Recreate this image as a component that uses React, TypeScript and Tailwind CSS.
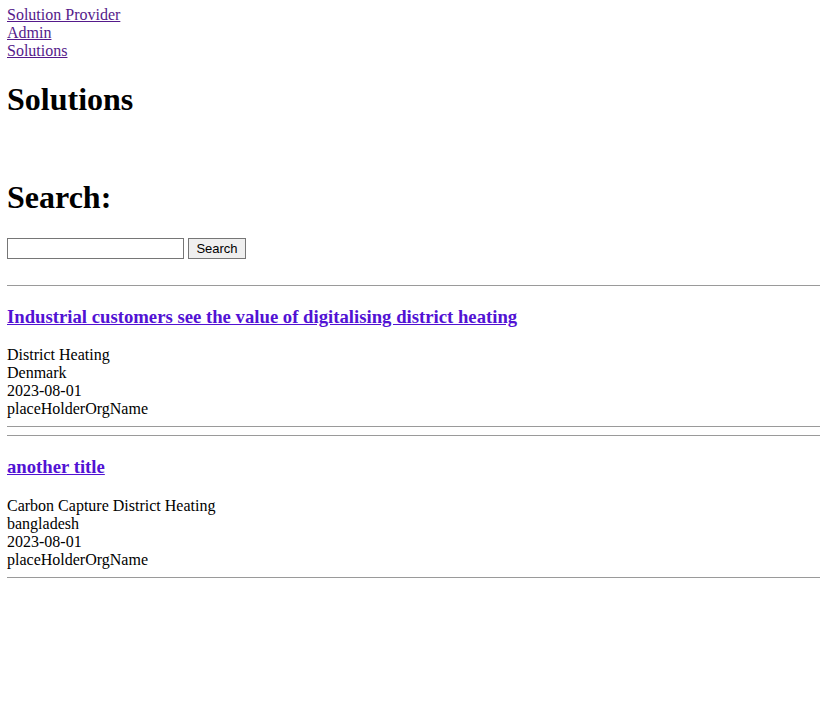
const solutions = [
  {
    title: 'Industrial customers see the value of digitalising district heating',
    tags: 'District Heating',
    country: 'Denmark',
    date: '2023-08-01',
    org: 'placeHolderOrgName',
  },
  {
    title: 'another title',
    tags: 'Carbon Capture District Heating',
    country: 'bangladesh',
    date: '2023-08-01',
    org: 'placeHolderOrgName',
  },
];

export default function App() {
  return (
    <div className="min-h-screen bg-white pl-[7px] pt-[6px] font-['Liberation_Serif',serif] text-[16px] leading-[normal] text-black">
      {/* Nav */}
      <nav>
        <div>
          <a href="#" className="text-[#551a8b] underline">Solution Provider</a>
        </div>
        <div>
          <a href="#" className="text-[#551a8b] underline">Admin</a>
        </div>
        <div>
          <a href="#" className="text-[#551a8b] underline">Solutions</a>
        </div>
      </nav>

      <h1 className="my-[21.44px] text-[32px] font-bold leading-[normal]">Solutions</h1>
      <br />
      <h1 className="my-[21.44px] text-[32px] font-bold leading-[normal]">Search:</h1>

      <form className="flex items-center gap-1" onSubmit={(e) => e.preventDefault()}>
        <input
          type="text"
          className="h-[21px] w-[177px] border border-[#767676] bg-white px-[2px] text-[13px]"
        />
        <button
          type="submit"
          className="h-[21px] w-[58px] border border-[#767676] bg-[#efefef] font-['Liberation_Sans',sans-serif] text-[13px] leading-[15px] text-black"
        >
          Search
        </button>
      </form>

      <div className="mt-[26px]">
        {solutions.map((s) => (
          <div key={s.title}>
            <hr className="my-2 border-t border-[#9a9a9a]" />
            <h3 className="mt-[19px] mb-[18.72px] text-[18.72px] font-bold leading-[23px]">
              <a href="#" className="text-[#5212d4] underline">{s.title}</a>
            </h3>
            <div>{s.tags}</div>
            <div>{s.country}</div>
            <div>{s.date}</div>
            <div>{s.org}</div>
            <hr className="my-2 border-t border-[#9a9a9a]" />
          </div>
        ))}
      </div>
    </div>
  );
}
